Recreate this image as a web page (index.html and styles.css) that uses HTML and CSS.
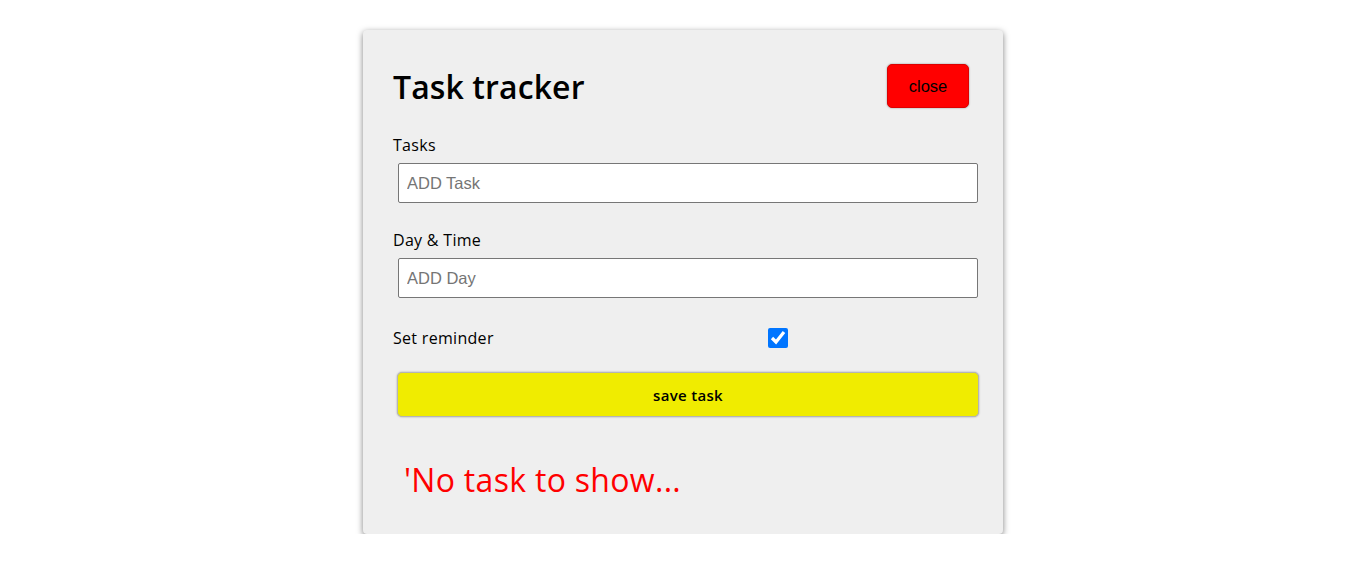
FILE: index.html
```html
<!DOCTYPE html>
<html lang="en">
<head>
<meta charset="utf-8">
<title>Task tracker</title>
<link rel="stylesheet" href="styles.css">
</head>
<body>
<div class="container">
  <header class="header">
    <h1 class="title">Task tracker</h1>
    <button class="btn-close">close</button>
  </header>
  <form class="add-form">
    <div class="form-control">
      <label class="label">Tasks</label>
      <input class="field" type="text" placeholder="ADD Task">
    </div>
    <div class="form-control">
      <label class="label">Day &amp; Time</label>
      <input class="field" type="text" placeholder="ADD Day">
    </div>
    <div class="form-check">
      <label class="label check-label">Set reminder</label>
      <input class="check" type="checkbox" checked>
    </div>
    <button type="button" class="btn-save">save task</button>
  </form>
  <h3 class="empty">'No task to show...</h3>
</div>
</body>
</html>
```
FILE: styles.css
```css
* { box-sizing: border-box; }
body {
  margin: 0;
  background: #ffffff;
  font-family: "Open Sans", "DejaVu Sans", sans-serif;
}
.container {
  width: 640px;
  margin: 30px auto 0;
  padding: 34px 30px 30px;
  background: #efefef;
  border-radius: 4px;
  box-shadow: 0 2px 6px rgba(0, 0, 0, 0.5);
}
.header {
  display: flex;
  justify-content: space-between;
  align-items: center;
  height: 44px;
}
.title {
  margin: 0;
  font-size: 32px;
  font-weight: 600;
  color: #000;
  letter-spacing: 0.1px;
}
.btn-close {
  width: 82px;
  height: 44px;
  margin-right: 4px;
  background: #ff0000;
  border: 1px solid #d00;
  border-radius: 5px;
  box-shadow: 0 0 2px rgba(0, 0, 0, 0.4);
  font-family: "Liberation Sans", Arial, sans-serif;
  font-size: 16.5px;
  color: #000;
}
.add-form { margin: 0; }
.form-control { margin-top: 25px; }
.label {
  display: block;
  font-size: 16px;
  line-height: 24px;
  letter-spacing: 0.3px;
  color: #000;
}
.field {
  display: block;
  width: 580px;
  height: 40px;
  margin: 6px 0 0 5px;
  padding: 0 8px;
  border: 1px solid #767676;
  border-radius: 2px;
  background: #fff;
  font-family: "Liberation Sans", Arial, sans-serif;
  font-size: 16.5px;
}
.field::placeholder { color: #757575; }
.form-check {
  display: flex;
  align-items: center;
  height: 24px;
  margin-top: 28px;
}
.check-label { flex: 0 0 375px; }
.check {
  width: 20px;
  height: 20px;
  margin: 0;
  accent-color: #0075ff;
}
.btn-save {
  display: block;
  width: 582px;
  height: 45px;
  margin: 22px 0 0 4px;
  background: #f0ec00;
  border: 1px solid #b5b5b5;
  border-radius: 5px;
  box-shadow: 0 0 2px rgba(0, 0, 0, 0.35);
  font-family: "Open Sans", "DejaVu Sans", sans-serif;
  font-size: 15px;
  font-weight: 600;
  letter-spacing: 0.3px;
  color: #000;
}
.empty {
  margin: 39px 0 0 11px;
  font-size: 32px;
  line-height: 48px;
  font-weight: 400;
  letter-spacing: 0.3px;
  color: #ff0000;
}
```
